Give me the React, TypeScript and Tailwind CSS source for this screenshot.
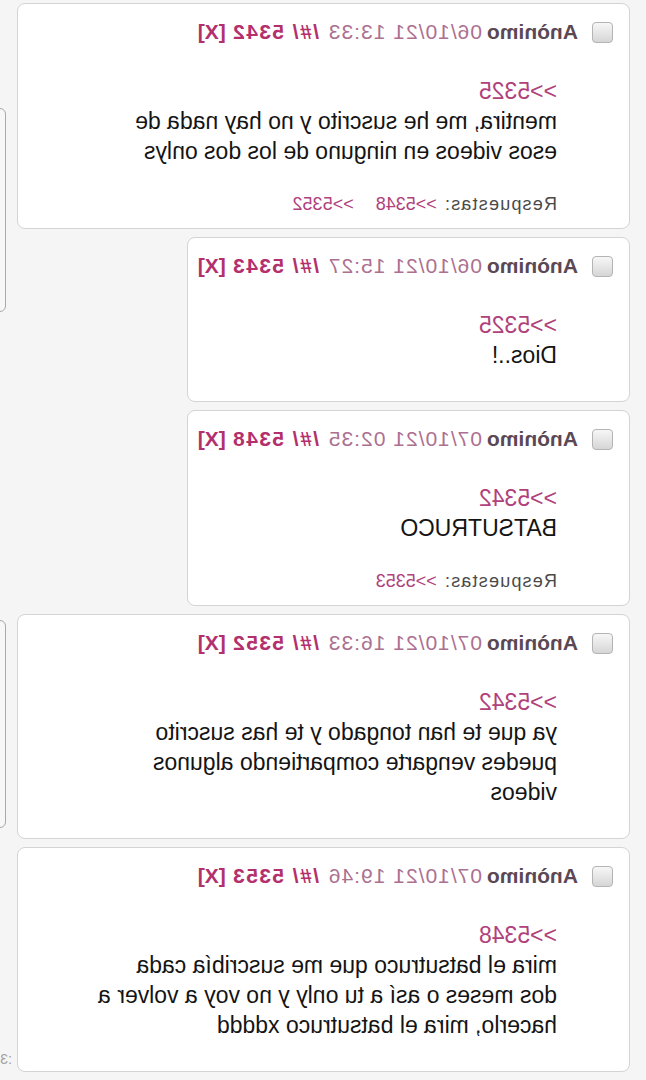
import React from "react";

type Post = {
  id: string;
  date: string;
  quote: string;
  lines: string[];
  replies?: string[];
  width: string;
};

const posts: Post[] = [
  {
    id: "5342",
    date: "06/10/21 13:33",
    quote: ">>5325",
    lines: ["mentira, me he suscrito y no hay nada de", "esos videos en ninguno de los dos onlys"],
    replies: [">>5348", ">>5352"],
    width: "w-[613px]",
  },
  {
    id: "5343",
    date: "06/10/21 15:27",
    quote: ">>5325",
    lines: ["Dios..!"],
    width: "w-[443px]",
  },
  {
    id: "5348",
    date: "07/10/21 02:35",
    quote: ">>5342",
    lines: ["BATSUTRUCO"],
    replies: [">>5353"],
    width: "w-[443px]",
  },
  {
    id: "5352",
    date: "07/10/21 16:33",
    quote: ">>5342",
    lines: ["ya que te han tongado y te has suscrito", "puedes vengarte compartiendo algunos", "videos"],
    width: "w-[613px]",
  },
  {
    id: "5353",
    date: "07/10/21 19:46",
    quote: ">>5348",
    lines: ["mira el batsutruco que me suscribía cada", "dos meses o así a tu only y no voy a volver a", "hacerlo, mira el batsutruco xdddd"],
    width: "w-[613px]",
  },
];

function Checkbox() {
  return (
    <div className="w-[21px] h-[21px] shrink-0 rounded-[4px] border border-[#b4b4b4] bg-gradient-to-b from-[#f7f7f7] to-[#d6d6d6]" />
  );
}

function Card({ p }: { p: Post }) {
  return (
    <div
      className={`${p.width} bg-white border border-[#d4d4d4] rounded-[8px] pt-[13px] pb-[10px] pl-[16px] pr-[10px]`}
    >
      <div className="flex items-center h-[30px]">
        <Checkbox />
        <div className="ml-[14px] flex items-baseline whitespace-nowrap leading-[30px]">
          <span className="text-[21px] font-bold text-[#5b4854]">Anònimo</span>
          <span className="ml-[5px] text-[#ac7090] tracking-[1px] text-[21px]">{p.date}</span>
          <span className="ml-[9px] font-bold text-[#b3306d] tracking-[1.4px] text-[21px]">/#/ {p.id}</span>
          <span className="ml-[6px] font-bold text-[#b3306d] text-[21px]">[X]</span>
        </div>
      </div>
      <div className="pl-[56px] mt-[29px] mb-[21px] text-[23px] leading-[30px] text-[#141414]">
        <div className="text-[#b0417c]">{p.quote}</div>
        {p.lines.map((l, i) => (
          <div key={i} className="whitespace-nowrap">
            {l}
          </div>
        ))}
      </div>
      {p.replies && (
        <div className="pl-[56px] mt-[25px] h-[27px] leading-[27px] text-[#4a4a4a] whitespace-nowrap flex items-baseline">
          <span className="text-[18px] tracking-[1.2px]">Respuestas:</span>
          {p.replies.map((r, i) => (
            <span
              key={i}
              className={`${i === 0 ? "ml-[7px]" : "ml-[22px]"} text-[18px] text-[#b0417c]`}
            >
              {r}
            </span>
          ))}
        </div>
      )}
    </div>
  );
}

export default function App() {
  return (
    <div
      className="w-[646px] h-[1080px] overflow-hidden bg-[#f5f5f5] -scale-x-100 flex"
      style={{ fontFamily: '"Liberation Sans", Arial, sans-serif' }}
    >
      <div className="w-[634px] shrink-0 pl-[16px] pt-[3px] flex flex-col items-start gap-[8px]">
        {posts.map((p) => (
          <Card key={p.id} p={p} />
        ))}
      </div>
      <div className="w-[12px] shrink-0 flex flex-col">
        <div className="mt-[108px] ml-[6px] w-[40px] h-[204px] shrink-0 rounded-[6px] border border-[#a9a9a9] bg-[#f7f7f7]" />
        <div className="mt-[308px] ml-[6px] w-[40px] h-[208px] shrink-0 rounded-[6px] border border-[#a9a9a9] bg-[#f7f7f7]" />
        <div className="mt-[222px] text-[14px] leading-[18px] text-[#a0a0a0] whitespace-nowrap">:3</div>
      </div>
    </div>
  );
}
